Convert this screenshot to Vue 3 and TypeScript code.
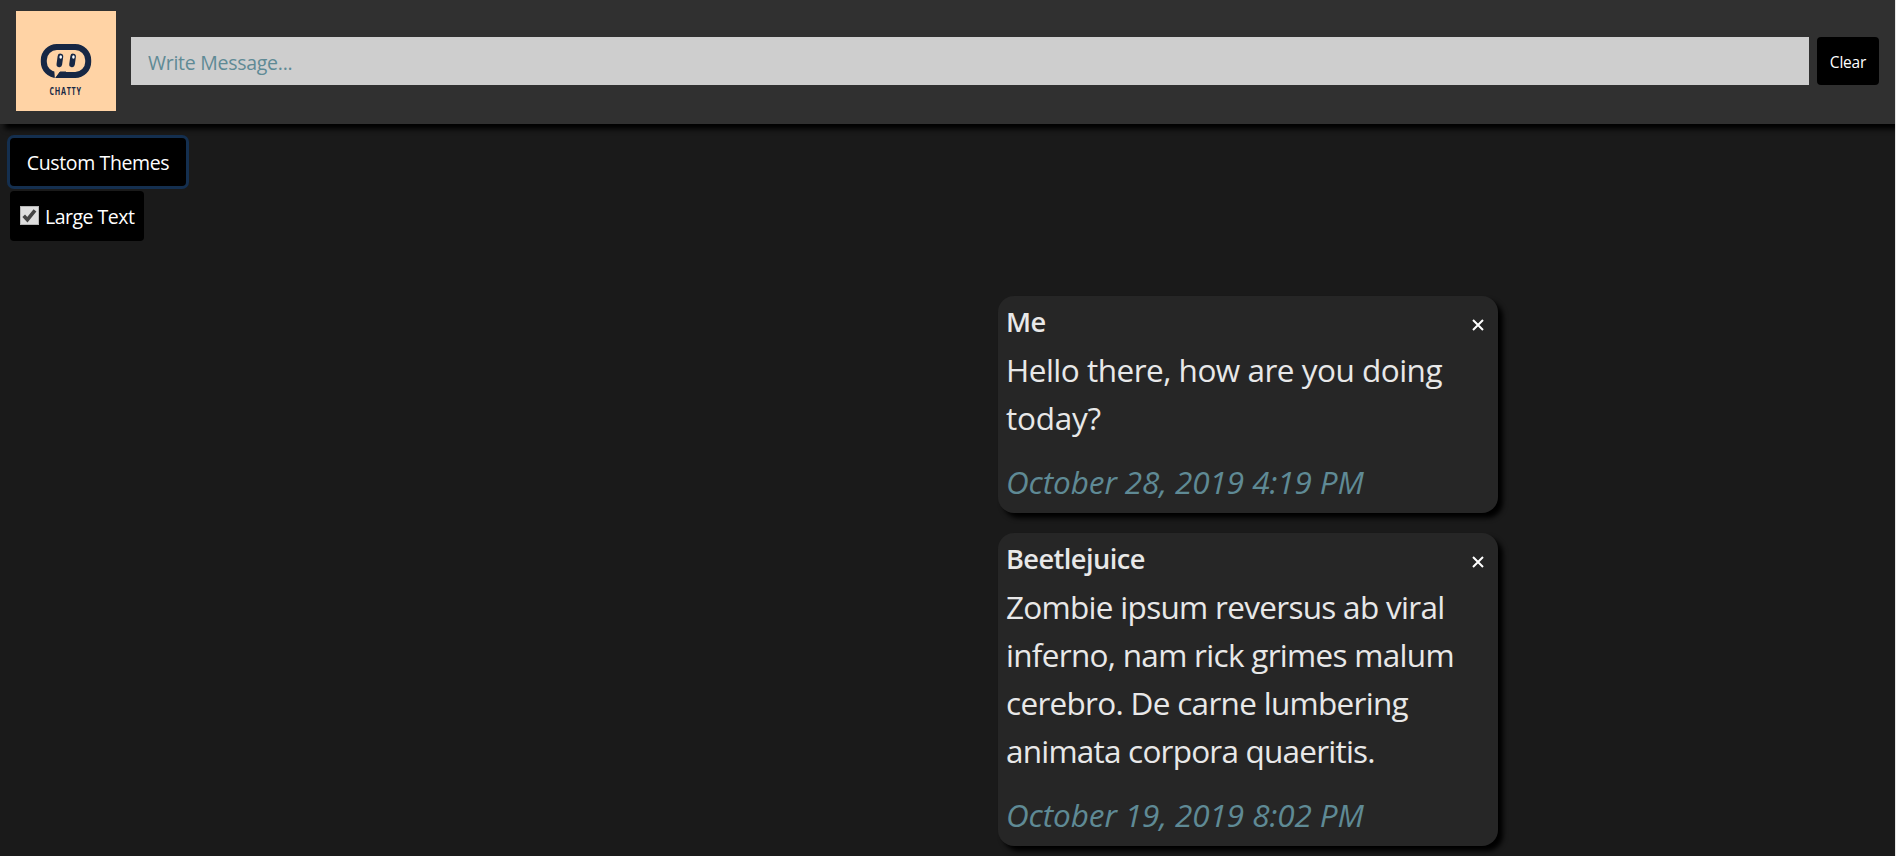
<script setup lang="ts">
import { ref } from 'vue'

interface Message {
  id: number
  author: string
  lines: { text: string; fit: string }[]
  date: string
}

const draft = ref('')
const largeText = ref(true)
const messages = ref<Message[]>([
  {
    id: 1,
    author: 'Me',
    lines: [
      { text: 'Hello there, how are you doing', fit: 'normal' },
      { text: 'today?', fit: 'loose' },
    ],
    date: 'October 28, 2019 4:19 PM',
  },
  {
    id: 2,
    author: 'Beetlejuice',
    lines: [
      { text: 'Zombie ipsum reversus ab viral', fit: 'tight' },
      { text: 'inferno, nam rick grimes malum', fit: 'tight' },
      { text: 'cerebro. De carne lumbering', fit: 'tight' },
      { text: 'animata corpora quaeritis.', fit: 'tighter' },
    ],
    date: 'October 19, 2019 8:02 PM',
  },
])

function remove(id: number) {
  messages.value = messages.value.filter((m) => m.id !== id)
}
</script>

<template>
  <div class="page">
    <header class="navbar">
      <svg class="logo" viewBox="0 0 100 100" role="img" aria-label="Chatty">
        <rect width="100" height="100" fill="#ffd3a5" />
        <rect x="27.8" y="36" width="44.4" height="28" rx="13" fill="none" stroke="#172744" stroke-width="6" />
        <path d="M38.3 60 L38.9 67.4 L44 60.5 L44 60Z" fill="#ffd3a5" />
        <path d="M39.4 67 L44.2 60.5 L50 60.5 L50 67Z" fill="#172744" />
        <g fill="#172744">
          <rect x="41" y="42.6" width="5.6" height="13.6" rx="2.8" transform="rotate(8 43.8 50)" />
          <rect x="53.7" y="42.6" width="5.6" height="13.6" rx="2.8" transform="rotate(8 56.5 50)" />
        </g>
        <ellipse cx="44.7" cy="46" rx="1.3" ry="1.8" fill="#fff" />
        <ellipse cx="57.4" cy="46" rx="1.3" ry="1.8" fill="#fff" />
        <text class="wordmark" transform="translate(33.6 84) scale(0.72 1)" textLength="43.5" lengthAdjust="spacing">CHATTY</text>
      </svg>
      <input v-model="draft" class="message-input" type="text" placeholder="Write Message..." />
      <button class="clear" type="button" @click="messages = []">Clear</button>
    </header>

    <section class="options">
      <button class="themes" type="button"><span>Custom Themes</span></button>
      <label class="toggle">
        <input v-model="largeText" class="native" type="checkbox" />
        <svg class="box" viewBox="0 0 19 19">
          <rect x="0.5" y="0.5" width="18" height="18" fill="#dedede" stroke="#b5b5b5" />
          <path v-if="largeText" d="M3.7 9.7 L7.4 13.7 L15 4.3" fill="none" stroke="#444" stroke-width="3.6" />
        </svg>
        <span>Large Text</span>
      </label>
    </section>

    <main class="feed">
      <article v-for="m in messages" :key="m.id" class="card">
        <div class="card-head">
          <h5>{{ m.author }}</h5>
          <button class="close" type="button" aria-label="Delete" @click="remove(m.id)">
            <svg viewBox="0 0 12 12"><path d="M1 1 L11 11 M11 1 L1 11" /></svg>
          </button>
        </div>
        <p class="body">
          <span v-for="l in m.lines" :key="l.text" class="line" :class="l.fit">{{ l.text }}</span>
        </p>
        <p class="date">{{ m.date }}</p>
      </article>
    </main>
  </div>
</template>

<style>
body {
  margin: 0;
  background: #1a1a1a;
  overflow: hidden;
}
</style>

<style scoped>
.page {
  height: 856px;
  box-sizing: border-box;
  overflow: hidden;
  border-right: 1px solid #e6e6e6;
  background: #1a1a1a;
  color: #e8e8e8;
  font-family: 'Open Sans', 'Noto Sans', sans-serif;
}
.navbar {
  display: flex;
  align-items: center;
  box-sizing: border-box;
  height: 124px;
  padding: 0 16px 2px 16px;
  background: #303030;
  box-shadow: 5px 5px 5px #000;
}
.logo {
  flex: none;
  width: 100px;
  height: 100px;
  margin-right: 15px;
}
.wordmark {
  font: 700 10px 'Open Sans', sans-serif;
  fill: #172744;
}
.message-input {
  flex: 1;
  box-sizing: border-box;
  height: 48px;
  margin-right: 8px;
  padding: 2px 17px 0;
  border: 0;
  border-radius: 0;
  background: #cecece;
  color: #222;
  font: 19.5px 'Open Sans', sans-serif;
  letter-spacing: -0.27px;
  outline: 0;
}
.message-input::placeholder {
  color: #5f8a95;
  opacity: 1;
}
button {
  border: 0;
  padding: 0;
  background: #000;
  color: #fff;
  font-family: inherit;
}
.clear {
  width: 62px;
  height: 48px;
  padding-top: 1px;
  border-radius: 4px;
  font-size: 15.5px;
  letter-spacing: -0.2px;
}
.options {
  display: flex;
  flex-direction: column;
  align-items: flex-start;
  gap: 5px;
  padding: 14px 10px 0;
}
.themes {
  width: 176px;
  height: 48px;
  border-radius: 4px;
  box-shadow: 0 0 0 3px #142f4f;
  font-size: 19.5px;
  letter-spacing: -0.37px;
}
.toggle {
  display: flex;
  align-items: center;
  box-sizing: border-box;
  width: 134px;
  height: 50px;
  padding: 0 0 1px 10px;
  border-radius: 4px;
  background: #000;
  color: #fff;
  font-size: 19.5px;
  letter-spacing: -0.5px;
  white-space: nowrap;
}
.toggle span {
  padding-top: 2px;
}
.native {
  display: none;
}
.box {
  flex: none;
  width: 19px;
  height: 19px;
  margin-right: 6px;
}
.feed {
  display: flex;
  flex-direction: column;
  gap: 20px;
  width: 500px;
  margin: 55.4px 0 0 998px;
}
.card {
  box-sizing: border-box;
  padding: 8px;
  border-radius: 16px;
  background: #262626;
  box-shadow: 5px 5px 5px #000;
}
.card-head {
  display: flex;
  justify-content: space-between;
  height: 41.8px;
}
h5 {
  margin: 0;
  font-size: 27.2px;
  font-weight: 600;
  letter-spacing: -0.55px;
  line-height: 36px;
}
.close {
  width: 12px;
  height: 12px;
  margin: 15px 6px 0 0;
  background: none;
}
.close svg {
  display: block;
  width: 12px;
  height: 12px;
  stroke: #fff;
  stroke-width: 2;
}
.body,
.date {
  margin: 0;
  font-size: 31.5px;
  line-height: 48px;
  white-space: nowrap;
}
.line {
  display: block;
}
.normal {
  letter-spacing: -0.5px;
}
.loose {
  letter-spacing: -0.25px;
}
.tight {
  letter-spacing: -0.7px;
}
.tighter {
  letter-spacing: -0.78px;
}
.date {
  margin: 16px 0 -1.2px;
  color: #5f8a95;
  font-style: italic;
  letter-spacing: -0.1px;
}
</style>
